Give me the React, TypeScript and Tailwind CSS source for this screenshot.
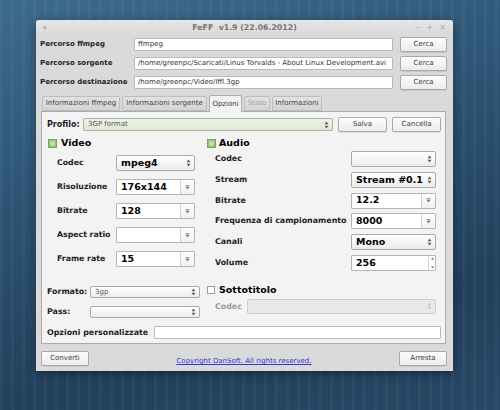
import React from 'react'

const font = "font-['DejaVu_Sans',sans-serif]"

function SpinArrows({ color = '#5a5a5a' }: { color?: string }) {
  return (
    <svg width="5" height="8" viewBox="0 0 5 8" className="shrink-0">
      <polygon points="0.6,3.2 2.5,0.6 4.4,3.2" fill={color} />
      <polygon points="0.6,4.8 2.5,7.4 4.4,4.8" fill={color} />
    </svg>
  )
}

function DownArrow() {
  return (
    <svg width="5" height="5" viewBox="0 0 5 5">
      <rect x="0.5" y="0.3" width="4" height="0.8" fill="#7a7a7a" />
      <polygon points="0.4,1.8 4.6,1.8 2.5,4.6" fill="#7a7a7a" />
    </svg>
  )
}

function Button({ label, w = 'w-[49px]' }: { label: string; w?: string }) {
  return (
    <div
      className={`${w} h-[15px] shrink-0 flex items-center justify-center rounded-[2px] border border-[#a9a9a9] bg-gradient-to-b from-[#fdfdfd] to-[#ebebeb] text-[7px] text-[#3a3a3a] shadow-[0_1px_0_rgba(0,0,0,0.08)]`}
    >
      {label}
    </div>
  )
}

function Input({ value, className = '' }: { value?: string; className?: string }) {
  return (
    <div
      className={`h-[13px] flex items-center bg-white border border-[#b9b9b9] rounded-[1px] pl-[3px] text-[7px] text-[#333] whitespace-nowrap overflow-hidden ${className}`}
    >
      {value}
    </div>
  )
}

function SpinCombo({
  text,
  big,
  className = '',
  green,
  disabled,
}: {
  text?: string
  big?: boolean
  className?: string
  green?: boolean
  disabled?: boolean
}) {
  const bg = green
    ? 'bg-gradient-to-b from-[#edf3e6] to-[#dfe8d4] border-[#a9b39f]'
    : disabled
      ? 'bg-[#e9e9e9] border-[#cdcdcd]'
      : 'bg-gradient-to-b from-white to-[#ececec] border-[#a9a9a9]'
  return (
    <div className={`flex items-center rounded-[2px] border pl-[4px] pr-[3px] ${bg} ${className}`}>
      <span
        className={`flex-1 whitespace-nowrap ${big ? 'text-[9.5px] font-bold text-black' : 'text-[7px] text-[#555]'}`}
      >
        {text}
      </span>
      <SpinArrows color={disabled ? '#c4c4c4' : '#5a5a5a'} />
    </div>
  )
}

function EditCombo({ text, className = '' }: { text?: string; className?: string }) {
  return (
    <div className={`flex bg-white border border-[#b5b5b5] rounded-[1px] ${className}`}>
      <span className="flex-1 flex items-center pl-[4px] text-[9.5px] font-bold text-black">{text}</span>
      <div className="w-[14px] border-l border-[#d2d2d2] bg-gradient-to-b from-white to-[#f0f0f0] flex items-center justify-center">
        <DownArrow />
      </div>
    </div>
  )
}

function SpinBox({ text, className = '' }: { text: string; className?: string }) {
  return (
    <div className={`flex bg-white border border-[#b5b5b5] rounded-[1px] ${className}`}>
      <span className="flex-1 flex items-center pl-[4px] text-[9.5px] font-bold text-black">{text}</span>
      <div className="w-[7px] border-l border-[#d2d2d2] flex flex-col items-center justify-between py-[1px]">
        <svg width="3" height="3" viewBox="0 0 3 3">
          <polygon points="0,2.6 1.5,0.4 3,2.6" fill="#666" />
        </svg>
        <svg width="3" height="3" viewBox="0 0 3 3">
          <polygon points="0,0.4 1.5,2.6 3,0.4" fill="#666" />
        </svg>
      </div>
    </div>
  )
}

function GreenCheck() {
  return (
    <svg width="9" height="9" viewBox="0 0 9 9" className="shrink-0">
      <rect x="0.5" y="0.5" width="8" height="8" fill="#95c275" stroke="#7aa75b" />
      <rect x="2.5" y="2.5" width="4" height="4" fill="#e7f2dc" />
      <path d="M3.2 3.2 L5.8 5.8 M5.8 3.2 L3.2 5.8" stroke="#8fb574" strokeWidth="0.8" />
    </svg>
  )
}

function Label({ children, className = '' }: { children: React.ReactNode; className?: string }) {
  return <span className={`font-bold whitespace-nowrap ${className}`}>{children}</span>
}

export default function App() {
  const videoRows: { label: string; kind: 'spin' | 'edit'; text?: string }[] = [
    { label: 'Codec', kind: 'spin', text: 'mpeg4' },
    { label: 'Risoluzione', kind: 'edit', text: '176x144' },
    { label: 'Bitrate', kind: 'edit', text: '128' },
    { label: 'Aspect ratio', kind: 'edit', text: '' },
    { label: 'Frame rate', kind: 'edit', text: '15' },
  ]

  const audioRows: { label: string; kind: 'spin' | 'edit' | 'box'; text?: string }[] = [
    { label: 'Codec', kind: 'spin', text: '' },
    { label: 'Stream', kind: 'spin', text: 'Stream #0.1' },
    { label: 'Bitrate', kind: 'edit', text: '12.2' },
    { label: 'Frequenza di campionamento', kind: 'edit', text: '8000' },
    { label: 'Canali', kind: 'spin', text: 'Mono' },
    { label: 'Volume', kind: 'box', text: '256' },
  ]

  const tabs = [
    { label: 'Informazioni ffmpeg', w: 'w-[78px]' },
    { label: 'Informazioni sorgente', w: 'w-[85px]' },
    { label: 'Opzioni', w: 'w-[33px]', active: true },
    { label: 'Stato', w: 'w-[26px]', disabled: true },
    { label: 'Informazioni', w: 'w-[50px]' },
  ]

  return (
    <div
      className={`${font} w-[500px] h-[410px] overflow-hidden pl-[36px] pt-[20px] bg-[image:repeating-linear-gradient(90deg,rgba(255,255,255,0.035)_0px,rgba(255,255,255,0.035)_3px,transparent_3px,transparent_11px),linear-gradient(165deg,#3d6b8c_0%,#2c5272_40%,#21405b_75%,#274866_100%)]`}
    >
      <div className="w-[417px] h-[351px] flex flex-col bg-[#dadada] rounded-t-[3px] shadow-[0_2px_8px_rgba(0,0,0,0.45)]">
        {/* title bar */}
        <div className="h-[16px] shrink-0 flex items-center px-[7px] rounded-t-[3px] bg-gradient-to-b from-[#e6e6e6] to-[#d9d9d9]">
          <span className="w-[30px] text-[7px] text-[#a5a5a5]">▾</span>
          <span className="flex-1 text-center text-[7.8px] font-bold text-[#747474] whitespace-pre">
            FeFF  v1.9 (22.06.2012)
          </span>
          <span className="w-[30px] flex justify-between text-[8px] text-[#ababab] leading-none">
            <span>–</span>
            <span>+</span>
            <span>×</span>
          </span>
        </div>

        {/* paths */}
        <div className="mt-[1px] pl-[4px] pr-[6px] flex flex-col gap-[4px]">
          {[
            ['Percorso ffmpeg', 'ffmpeg'],
            ['Percorso sorgente', '/home/greenpc/Scaricati/Linus Torvalds - About Linux Development.avi'],
            ['Percorso destinazione', '/home/greenpc/Video/lffl.3gp'],
          ].map(([l, v]) => (
            <div key={l} className="h-[15px] flex items-center">
              <Label className="w-[94px] shrink-0 text-[7px] text-[#1e1e1e]">{l}</Label>
              <Input value={v} className="flex-1" />
              <div className="w-[7px]" />
              <Button label="Cerca" w="w-[47px]" />
            </div>
          ))}
        </div>

        {/* tabs */}
        <div className="mt-[5px] h-[17px] flex items-end gap-[2px] pl-[6px] relative z-10">
          {tabs.map((t) =>
            t.active ? (
              <div
                key={t.label}
                className={`${t.w} h-[17px] flex items-start pt-[3px] justify-center bg-[#f3f3f3] border border-b-0 border-[#ababab] rounded-t-[2px] text-[7px] text-[#333]`}
              >
                {t.label}
              </div>
            ) : (
              <div
                key={t.label}
                className={`${t.w} h-[15px] mb-[1px] flex items-center justify-center bg-gradient-to-b from-[#e2e2e2] to-[#d4d4d4] border border-[#bdbdbd] rounded-t-[2px] text-[7px] whitespace-nowrap ${t.disabled ? 'text-[#a3a3a3]' : 'text-[#444]'}`}
              >
                {t.label}
              </div>
            ),
          )}
        </div>

        {/* panel */}
        <div className="-mt-[1px] ml-[5px] mr-[7px] h-[233px] shrink-0 border border-[#ababab] bg-[#f3f3f3] flex flex-col">
          {/* profilo */}
          <div className="mt-[5px] h-[15px] pl-[5px] pr-[4px] flex items-center">
            <Label className="w-[36px] shrink-0 text-[8px] text-[#1e1e1e]">Profilo:</Label>
            <SpinCombo text="3GP format" green className="flex-1 h-[13px]" />
            <div className="w-[5px]" />
            <Button label="Salva" />
            <div className="w-[5px]" />
            <Button label="Cancella" />
          </div>

          {/* video / audio */}
          <div className="mt-[5px] pl-[5px] flex">
            <div className="w-[160px] shrink-0">
              <div className="h-[12px] flex items-center gap-[4px] pl-[1px]">
                <GreenCheck />
                <span className="text-[9.5px] font-bold text-black">Video</span>
              </div>
              <div className="mt-[6px] flex flex-col gap-[8px]">
                {videoRows.map((r) => (
                  <div key={r.label} className="h-[16px] pl-[10px] flex items-center">
                    <Label className="w-[59px] shrink-0 text-[7.8px] text-[#1e1e1e]">{r.label}</Label>
                    {r.kind === 'spin' ? (
                      <SpinCombo text={r.text} big className="w-[79px] h-[16px]" />
                    ) : (
                      <EditCombo text={r.text} className="w-[79px] h-[16px]" />
                    )}
                  </div>
                ))}
              </div>
            </div>
            <div className="w-[229px] shrink-0">
              <div className="h-[12px] flex items-center gap-[3px]">
                <GreenCheck />
                <span className="text-[9.5px] font-bold text-black">Audio</span>
              </div>
              <div className="mt-[2px] flex flex-col gap-[4.8px]">
                {audioRows.map((r) => (
                  <div key={r.label} className="h-[16px] pl-[8px] flex items-center">
                    <Label className="w-[136px] shrink-0 text-[7.9px] text-[#1e1e1e]">{r.label}</Label>
                    {r.kind === 'spin' ? (
                      <SpinCombo text={r.text} big className="w-[85px] h-[16px]" />
                    ) : r.kind === 'edit' ? (
                      <EditCombo text={r.text} className="w-[85px] h-[16px]" />
                    ) : (
                      <SpinBox text={r.text ?? ''} className="w-[85px] h-[16px]" />
                    )}
                  </div>
                ))}
              </div>
            </div>
          </div>

          {/* formato / sottotitolo */}
          <div className="mt-[13px] pl-[5px] flex items-start">
            <div className="w-[160px] shrink-0 pt-[2px] flex flex-col gap-[8px]">
              <div className="h-[12px] flex items-center">
                <Label className="w-[43px] shrink-0 text-[7.9px] text-[#1e1e1e]">Formato:</Label>
                <SpinCombo text="3gp" className="w-[110px] h-[12px]" />
              </div>
              <div className="h-[12px] flex items-center">
                <Label className="w-[43px] shrink-0 text-[7.9px] text-[#1e1e1e]">Pass:</Label>
                <SpinCombo text="" className="w-[110px] h-[12px]" />
              </div>
            </div>
            <div className="w-[229px] shrink-0 flex flex-col gap-[3px]">
              <div className="h-[12px] flex items-center gap-[4px]">
                <div className="w-[8px] h-[8px] bg-white border border-[#9a9a9a]" />
                <span className="text-[9.5px] font-bold text-black">Sottotitolo</span>
              </div>
              <div className="h-[15px] pl-[8px] flex items-center">
                <Label className="w-[32px] shrink-0 text-[7.9px] text-[#9a9a9a]">Codec</Label>
                <SpinCombo text="" disabled className="w-[189px] h-[15px]" />
              </div>
            </div>
          </div>

          {/* opzioni personalizzate */}
          <div className="mt-[8px] h-[13px] pl-[5px] pr-[4px] flex items-center">
            <Label className="w-[107px] shrink-0 text-[7.9px] text-[#1e1e1e]">Opzioni personalizzate</Label>
            <Input className="flex-1" />
          </div>
        </div>

        {/* bottom bar */}
        <div className="mt-[7px] h-[15px] pl-[5px] pr-[6px] flex justify-between">
          <Button label="Converti" w="w-[48px]" />
          <span className="self-end leading-[9px] text-[7px] text-[#3535d6] underline">
            Copyright DanSoft. All rights reserved.
          </span>
          <Button label="Arresta" w="w-[48px]" />
        </div>
      </div>
    </div>
  )
}
